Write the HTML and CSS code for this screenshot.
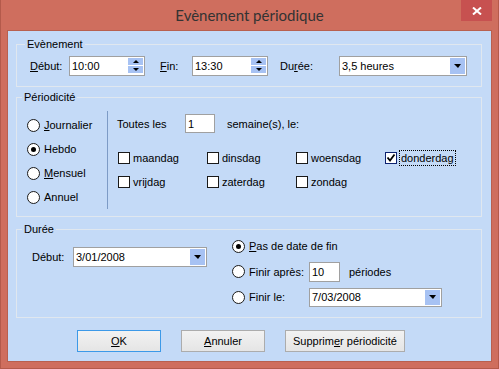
FILE: index.html
```html
<!DOCTYPE html>
<html lang="fr">
<head>
    <meta charset="UTF-8">
    <title>Evènement périodique</title>
    <link rel="stylesheet" href="styles.css">
</head>
<body>
<div class="window">
    <div class="titlebar">
        <span class="title">Evènement périodique</span>
        <span class="close">
            <svg width="10" height="8" viewBox="0 0 10 8"><path d="M1 0.5 L9 7.5 M9 0.5 L1 7.5" stroke="#fff" stroke-width="2"/></svg>
        </span>
    </div>
    <div class="client">
        <!-- Evènement -->
        <fieldset class="group group-event">
            <legend>Evènement</legend>
            <div class="event-row">
                <span class="lbl lbl-debut"><u>D</u>ébut:</span>
                <div class="field spin time"><span>10:00</span><span class="spinbtns"><i class="up"></i><i class="down"></i></span></div>
                <span class="lbl lbl-fin"><u>F</u>in:</span>
                <div class="field spin time"><span>13:30</span><span class="spinbtns"><i class="up"></i><i class="down"></i></span></div>
                <span class="lbl lbl-duree">Du<u>r</u>ée:</span>
                <div class="field combo duree"><span>3,5 heures</span><i class="drop"></i></div>
            </div>
        </fieldset>

        <!-- Périodicité -->
        <fieldset class="group group-period">
            <legend>Périodicité</legend>
            <div class="period-body">
                <div class="period-types">
                    <div class="radio"><span class="dot"></span><span><u>J</u>ournalier</span></div>
                    <div class="radio on"><span class="dot"></span><span>Hebdo</span></div>
                    <div class="radio"><span class="dot"></span><span><u>M</u>ensuel</span></div>
                    <div class="radio"><span class="dot"></span><span>Annuel</span></div>
                </div>
                <div class="sep"></div>
                <div class="period-detail">
                    <div class="every-row">
                        <span class="lbl lbl-toutes">Toutes les</span>
                        <div class="field small"><span>1</span></div>
                        <span class="lbl-weeks">semaine(s), le:</span>
                    </div>
                    <div class="days">
                        <div class="check"><span class="box"></span><span>maandag</span></div>
                        <div class="check"><span class="box"></span><span>dinsdag</span></div>
                        <div class="check"><span class="box"></span><span>woensdag</span></div>
                        <div class="check on"><span class="box"><svg width="10" height="10" viewBox="0 0 10 10"><path d="M1.5 4.5 L4 7.5 L8.5 1.5" stroke="#000" stroke-width="1.8" fill="none"/></svg></span><span class="focus">donderdag</span></div>
                        <div class="check"><span class="box"></span><span>vrijdag</span></div>
                        <div class="check"><span class="box"></span><span>zaterdag</span></div>
                        <div class="check"><span class="box"></span><span>zondag</span></div>
                    </div>
                </div>
            </div>
        </fieldset>

        <!-- Durée -->
        <fieldset class="group group-range">
            <legend>Durée</legend>
            <div class="range-body">
                <div class="range-start">
                    <span class="lbl lbl-rdebut">Début:</span>
                    <div class="field combo date-start"><span>3/01/2008</span><i class="drop"></i></div>
                </div>
                <div class="range-end">
                    <div class="radio on"><span class="dot"></span><span><u>P</u>as de date de fin</span></div>
                    <div class="radio"><span class="dot"></span><span class="lbl lbl-end">Finir après:</span><div class="field count"><span>10</span></div><span class="lbl-per">périodes</span></div>
                    <div class="radio"><span class="dot"></span><span class="lbl lbl-end">Finir le:</span><div class="field combo date-end"><span>7/03/2008</span><i class="drop"></i></div></div>
                </div>
            </div>
        </fieldset>

        <div class="buttons">
            <button class="btn default"><u>O</u>K</button>
            <button class="btn"><u>A</u>nnuler</button>
            <button class="btn wide">Supprim<u>e</u>r périodicité</button>
        </div>
    </div>
</div>
</body>
</html>
```

FILE: styles.css
```css
*{
    margin: 0;
    padding: 0;
    box-sizing: border-box;
}
body{
    font-family: "Liberation Sans", Arial, sans-serif;
    font-size: 11px;
    color: #000;
}
u{
    text-decoration: underline;
    text-underline-offset: 1px;
}
/* fenêtre */
.window{
    width: 499px;
    height: 369px;
    background: #cf6e5e;
    padding: 0 7px 7px 7px;
    box-shadow: inset 1px 0 0 #b45a4b, inset -1px 0 0 #b45a4b, inset 0 -1px 0 #b45a4b;
}
.titlebar{
    height: 30px;
    position: relative;
    display: flex;
    justify-content: center;
    align-items: center;
}
.title{
    font-family: Lato, "Noto Sans", sans-serif;
    font-size: 15px;
    color: #333;
    margin-top: -1px;
}
.close{
    position: absolute;
    right: 0;
    top: 0;
    width: 31px;
    height: 21px;
    background: #c75150;
    display: flex;
    align-items: center;
    justify-content: center;
}
.client{
    height: 332px;
    background: #c4daf7;
    border: 1px solid #b8604f;
    padding-top: 7px;
}
/* groupes */
.group{
    margin: 0 9px 0 8px;
    border: 1px solid #e0e7ef;
    padding: 0;
    min-inline-size: 0;
}
.group legend{
    line-height: 13px;
    padding: 0 2px;
    margin-left: 5px;
}
.group-event legend{
    margin-left: 8px;
}
.group-period{
    margin-top: 4px;
}
.group-range{
    margin-top: 6px;
}
.lbl{
    display: inline-block;
    flex: none;
}
/* champs */
.field{
    height: 20px;
    background: #fff;
    border: 1px solid #a0a0a0;
    padding: 1px 1px 1px 2px;
    display: flex;
    align-items: center;
    justify-content: space-between;
    flex: none;
}
.spinbtns{
    display: flex;
    flex-direction: column;
    gap: 1px;
    align-self: flex-start;
}
.spinbtns i{
    width: 15px;
    height: 7px;
    background: #a7c2f3;
    display: flex;
    align-items: center;
    justify-content: center;
}
.spinbtns i::after{
    content: '';
    border-left: 3px solid transparent;
    border-right: 3px solid transparent;
}
.spinbtns .up::after{
    border-bottom: 3px solid #000;
}
.spinbtns .down::after{
    border-top: 3px solid #000;
}
.drop{
    width: 15px;
    height: 16px;
    background: #a7c2f3;
    display: flex;
    align-items: center;
    justify-content: center;
    align-self: flex-start;
}
.drop::after{
    content: '';
    border-left: 4px solid transparent;
    border-right: 3px solid transparent;
    border-top: 4px solid #000;
}
/* Evènement */
.event-row{
    display: flex;
    align-items: center;
    padding: 5px 0 10px 13px;
}
.time{
    width: 76px;
}
.lbl-debut{
    width: 39px;
}
.lbl-fin{
    width: 32px;
    margin-left: 15px;
}
.lbl-duree{
    width: 59px;
    margin-left: 12px;
}
.duree{
    width: 128px;
}
/* Périodicité */
.period-body{
    display: flex;
    padding: 7px 0 7px 0;
}
.period-types{
    width: 90px;
    padding: 2px 0 0 10px;
}
.period-types .radio{
    height: 24px;
}
.radio{
    display: flex;
    align-items: center;
}
.dot{
    width: 13px;
    height: 13px;
    border: 1px solid #1a1a1a;
    border-radius: 50%;
    background: #fff;
    margin-right: 4px;
    display: flex;
    align-items: center;
    justify-content: center;
    flex: none;
}
.radio.on .dot::after{
    content: '';
    width: 5px;
    height: 5px;
    border-radius: 50%;
    background: #000;
}
.sep{
    width: 1px;
    height: 98px;
    background: #7d9bc6;
}
.period-detail{
    padding: 3px 0 0 9px;
}
.every-row{
    display: flex;
    align-items: center;
    height: 19px;
}
.lbl-toutes{
    width: 68px;
}
.small{
    width: 30px;
    height: 19px;
}
.lbl-weeks{
    margin-left: 12px;
}
.days{
    display: grid;
    grid-template-columns: repeat(4, 89px);
    grid-auto-rows: 24px;
    margin-top: 13px;
    padding-left: 1px;
}
.check{
    display: flex;
    align-items: center;
}
.box{
    width: 12px;
    height: 12px;
    border: 1px solid #1a1a1a;
    background: #fff;
    margin-right: 3px;
    display: flex;
    align-items: center;
    justify-content: center;
    flex: none;
}
.check.on .box{
    border-color: #0c2170;
}
.focus{
    border: 1px dotted #000;
    padding: 0 1px;
    line-height: 14px;
    margin-left: -1px;
}
/* Durée */
.range-body{
    display: flex;
    padding: 0 0 10px 0;
}
.range-start{
    width: 215px;
    padding: 11px 0 0 15px;
    display: flex;
    align-items: flex-start;
}
.lbl-rdebut{
    width: 41px;
    line-height: 20px;
}
.date-start{
    width: 134px;
}
.range-end{
    display: grid;
    grid-auto-rows: 20px;
    row-gap: 5.5px;
}
.lbl-end{
    width: 60px;
}
.count{
    width: 31px;
}
.lbl-per{
    margin-left: 9px;
}
.date-end{
    width: 133px;
    height: 19px;
}
.date-end .drop{
    height: 15px;
}
/* boutons */
.buttons{
    display: flex;
    gap: 20px;
    padding-left: 69px;
    margin-top: 12px;
}
.btn{
    width: 84px;
    height: 22px;
    font-family: "Liberation Sans", Arial, sans-serif;
    font-size: 11px;
    color: #000;
    background: linear-gradient(#f2f2f2, #e5e5e5);
    border: 1px solid #acacac;
}
.btn.default{
    border-color: #3c99e8;
}
.btn.wide{
    width: 120px;
}
```
